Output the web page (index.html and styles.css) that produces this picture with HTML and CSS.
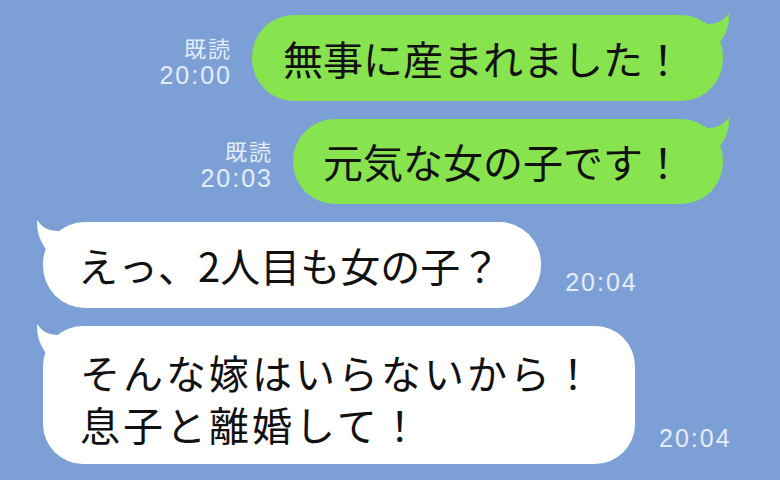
FILE: index.html
```html
<!DOCTYPE html>
<html lang="ja">
<head>
<meta charset="utf-8">
<link rel="stylesheet" href="styles.css">
</head>
<body>
<div class="chat">
  <div class="row out">
    <div class="meta"><span class="read">既読</span><span class="time">20:00</span></div>
    <div class="bubble green b1">無事に産まれました！<svg class="tail" viewBox="0 0 32 44" width="32" height="44"><path d="M8,13 Q22,14 30,2 Q31,18 20,33 L8,33 Z"/></svg></div>
  </div>
  <div class="row out">
    <div class="meta"><span class="read">既読</span><span class="time">20:03</span></div>
    <div class="bubble green b2">元気な女の子です！<svg class="tail" viewBox="0 0 32 44" width="32" height="44"><path d="M8,13 Q22,14 30,2 Q31,18 20,33 L8,33 Z"/></svg></div>
  </div>
  <div class="row in">
    <div class="bubble white b3">えっ、2人目も女の子？<svg class="tail" viewBox="0 0 32 44" width="32" height="44"><path d="M8,13 Q22,14 30,2 Q31,18 20,33 L8,33 Z"/></svg></div>
    <div class="meta"><span class="time">20:04</span></div>
  </div>
  <div class="row in">
    <div class="bubble white b4"><span class="line">そんな嫁はいらないから！</span><span class="line">息子と離婚して！</span><svg class="tail" viewBox="0 0 32 44" width="32" height="44"><path d="M8,13 Q22,14 30,2 Q31,18 20,33 L8,33 Z"/></svg></div>
    <div class="meta"><span class="time">20:04</span></div>
  </div>
</div>
</body>
</html>
```
FILE: styles.css
```css
html, body {
  margin: 0;
  padding: 0;
  background: #7ca0d5;
}
body {
  width: 780px;
  height: 480px;
  overflow: hidden;
}
.chat {
  display: flex;
  flex-direction: column;
  gap: 18px;
  padding-top: 15px;
}
.row {
  display: flex;
  align-items: flex-end;
}
.row.out {
  justify-content: flex-end;
  padding-right: 57px;
}
.row.in {
  justify-content: flex-start;
  padding-left: 43px;
}
.bubble {
  position: relative;
  font-family: "Noto Sans CJK JP", sans-serif;
  font-size: 40px;
  line-height: 52px;
  color: #111;
  padding: 17px 40px 17px 31px;
  border-radius: 42px;
  white-space: nowrap;
}
.green { background: #87e34e; }
.white { background: #ffffff; }
.b2 { padding-left: 30px; padding-top: 16px; padding-bottom: 17px; }
.b3 { padding-left: 35px; padding-right: 41px; }
.b4 {
  display: flex;
  flex-direction: column;
  gap: 0;
  padding: 20px 39px 14px 37px;
  letter-spacing: 3px;
  border-radius: 40px;
}
.line {
  display: block;
  height: 52px;
  line-height: 52px;
}
.tail {
  position: absolute;
  top: -4px;
  right: -8px;
}
.green .tail path { fill: #87e34e; }
.white .tail path { fill: #ffffff; }
.in .tail {
  right: auto;
  left: -8px;
  transform: scaleX(-1);
}
.meta {
  display: flex;
  flex-direction: column;
  align-items: flex-end;
  color: #e4ecf8;
  padding-bottom: 12px;
}
.out .meta { margin-right: 20px; }
.in .meta { margin-left: 24px; }
.read {
  font-family: "Noto Sans CJK JP", sans-serif;
  font-size: 22px;
  line-height: 28px;
  letter-spacing: 2px;
}
.time {
  font-family: "Liberation Sans", Arial, sans-serif;
  font-size: 25px;
  line-height: 28px;
  letter-spacing: 2px;
}
```
